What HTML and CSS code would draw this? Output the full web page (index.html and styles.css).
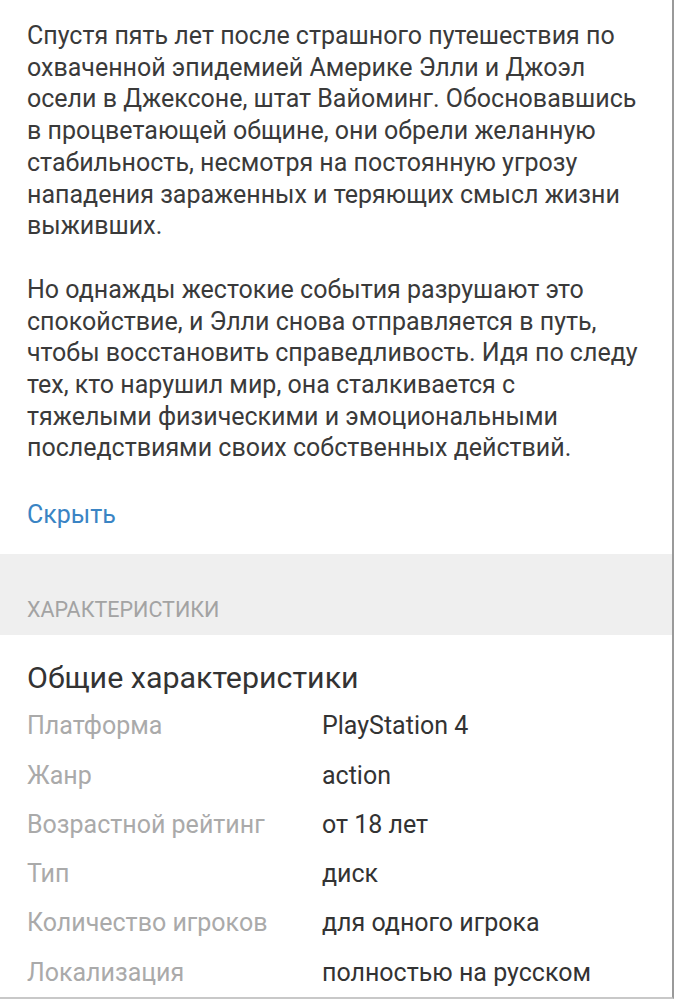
FILE: index.html
```html
<!DOCTYPE html>
<html lang="ru">
<head>
  <meta charset="UTF-8" />
  <meta name="viewport" content="width=device-width, initial-scale=1.0" />
  <title>Описание</title>
  <link rel="stylesheet" href="styles.css">
</head>
<body>

<div class="page">
  <div class="description">
    <p>Спустя пять лет после страшного путешествия по охваченной эпидемией Америке Элли и Джоэл осели в Джексоне, штат Вайоминг. Обосновавшись в процветающей общине, они обрели желанную стабильность, несмотря на постоянную угрозу нападения зараженных и теряющих смысл жизни выживших.</p>
    <p>Но однажды жестокие события разрушают это спокойствие, и Элли снова отправляется в путь, чтобы восстановить справедливость. Идя по следу тех, кто нарушил мир, она сталкивается с тяжелыми физическими и эмоциональными последствиями своих собственных действий.</p>
    <a href="#" class="toggle-link">Скрыть</a>
  </div>

  <div class="section-title">Характеристики</div>

  <div class="specs">
    <h2>Общие характеристики</h2>
    <div class="spec-row">
      <span class="spec-name">Платформа</span>
      <span class="spec-value">PlayStation 4</span>
    </div>
    <div class="spec-row">
      <span class="spec-name">Жанр</span>
      <span class="spec-value">action</span>
    </div>
    <div class="spec-row">
      <span class="spec-name">Возрастной рейтинг</span>
      <span class="spec-value">от 18 лет</span>
    </div>
    <div class="spec-row">
      <span class="spec-name">Тип</span>
      <span class="spec-value">диск</span>
    </div>
    <div class="spec-row">
      <span class="spec-name">Количество игроков</span>
      <span class="spec-value">для одного игрока</span>
    </div>
    <div class="spec-row">
      <span class="spec-name">Локализация</span>
      <span class="spec-value">полностью на русском</span>
    </div>
  </div>
</div>

</body>
</html>
```

FILE: styles.css
```css
body {
  font-family: Roboto, "Noto Sans", Arial, sans-serif;
  margin: 0;
  background: #fff;
  color: #333;
}
.page {
  width: 672px;
  height: 997px;
  overflow: hidden;
  border-right: 2px solid #9a9a9a;
  border-bottom: 2px solid #c8c8c8;
}
.description {
  padding: 20px 27px 23px 27px;
}
.description p {
  margin: 0 0 32px 0;
  font-size: 25px;
  line-height: 31.7px;
  color: #3a3a3a;
}
.toggle-link {
  display: block;
  margin-top: 35px;
  font-size: 25px;
  line-height: 32px;
  color: #3a84c4;
  text-decoration: none;
}
.section-title {
  background: #efefef;
  height: 81px;
  box-sizing: border-box;
  padding: 44px 27px 0 27px;
  font-size: 21.5px;
  line-height: 24px;
  text-transform: uppercase;
  color: #a3a3a3;
}
.specs {
  padding: 26px 27px 0 27px;
}
.specs h2 {
  margin: 0 0 6px 0;
  font-size: 30.4px;
  font-weight: normal;
  line-height: 34px;
  color: #333;
}
.spec-row {
  display: flex;
  height: 49.3px;
  align-items: center;
  font-size: 25px;
}
.spec-name {
  width: 295px;
  color: #aaa;
}
.spec-value {
  color: #333;
}
```
